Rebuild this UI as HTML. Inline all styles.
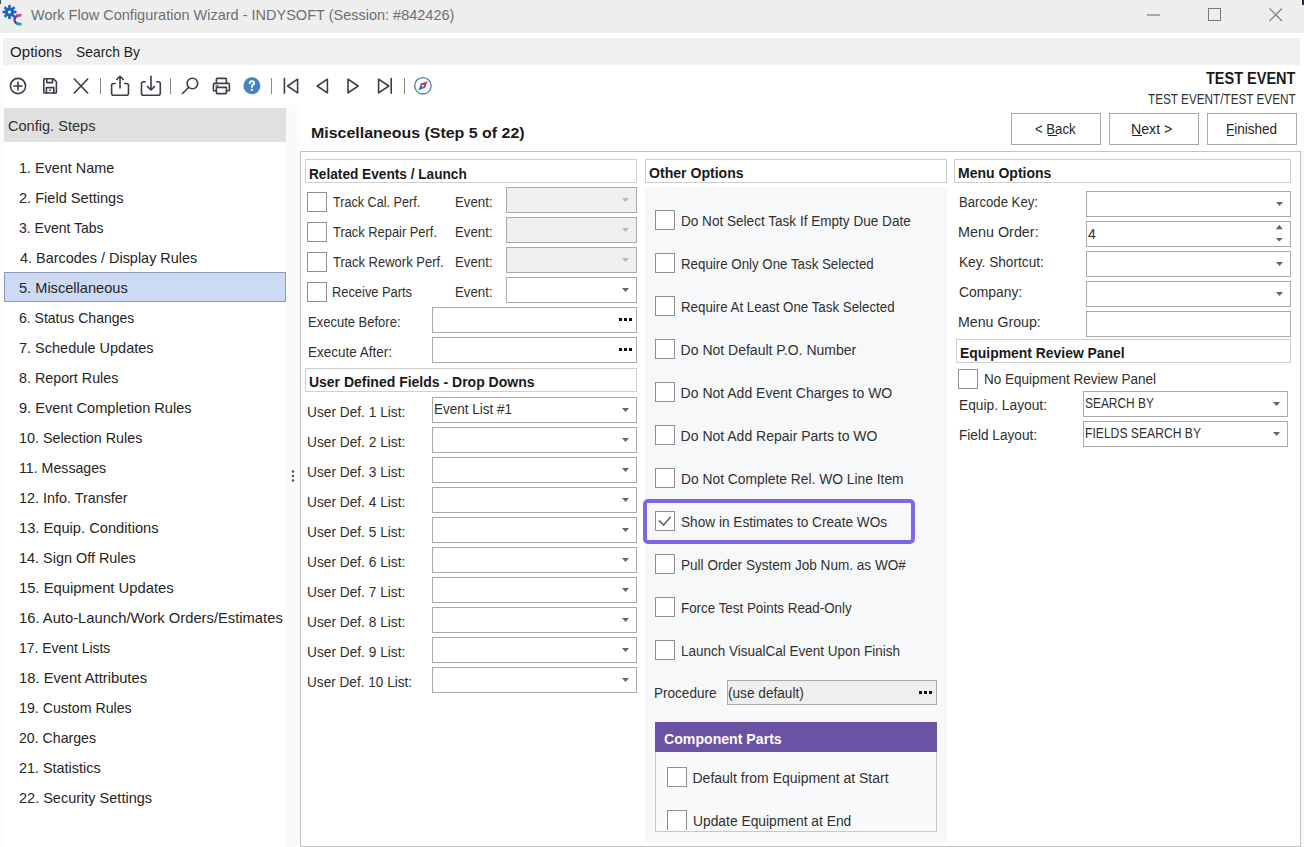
<!DOCTYPE html>
<html><head><meta charset="utf-8"><style>
html,body{margin:0;padding:0;width:1304px;height:847px;overflow:hidden;background:#fff;position:relative}
.t{position:absolute;font-family:"Liberation Sans",sans-serif;line-height:1;white-space:nowrap}
svg{position:absolute;overflow:visible}
</style></head><body>
<div style="position:absolute;left:0px;top:0px;width:1304px;height:33px;background:#eeeeee;"></div>
<svg style="left:0;top:0" width="1304" height="40"><line x1="1147" y1="15" x2="1160" y2="15" stroke="#7a7a7a" stroke-width="1.2"/><rect x="1208.5" y="8.5" width="12" height="12" fill="none" stroke="#7a7a7a" stroke-width="1"/><path d="M1269.5 8.5 L1282 21 M1282 8.5 L1269.5 21" stroke="#7a7a7a" stroke-width="1.2"/></svg>
<svg style="left:0;top:0" width="30" height="30" viewBox="0 0 30 30"><g transform="translate(9.5,12)" fill="#1565c0"><circle r="4.6"/><rect x="-1.3" y="-7" width="2.6" height="3.5" transform="rotate(0)"/><rect x="-1.3" y="-7" width="2.6" height="3.5" transform="rotate(45)"/><rect x="-1.3" y="-7" width="2.6" height="3.5" transform="rotate(90)"/><rect x="-1.3" y="-7" width="2.6" height="3.5" transform="rotate(135)"/><rect x="-1.3" y="-7" width="2.6" height="3.5" transform="rotate(180)"/><rect x="-1.3" y="-7" width="2.6" height="3.5" transform="rotate(225)"/><rect x="-1.3" y="-7" width="2.6" height="3.5" transform="rotate(270)"/><rect x="-1.3" y="-7" width="2.6" height="3.5" transform="rotate(315)"/><circle r="1.6" fill="#fff"/></g><path d="M20.5 15.2 C16.5 15.5 14.5 17.5 14.5 20 C14.5 22.5 16.5 24.2 20.5 24" fill="none" stroke="#6a3fa0" stroke-width="2.4"/><path d="M16.5 15.5 L21.5 15" stroke="#d04a8a" stroke-width="2.4"/><path d="M16.5 23.8 L21.5 24.2" stroke="#1aa3b5" stroke-width="2.4"/></svg>
<div style="position:absolute;left:0px;top:0px;width:1px;height:4px;background:#3a4a50;"></div>
<div style="position:absolute;left:1302px;top:0px;width:2px;height:5px;background:#2a2a48;"></div>
<div style="position:absolute;left:3px;top:38px;width:1297px;height:27px;background:#f0f0f0;"></div>
<svg style="left:0;top:65" width="460" height="40" viewBox="0 65 460 40"><g fill="none" stroke="#3c3c4a" stroke-width="1.6" stroke-linecap="round" stroke-linejoin="round"><circle cx="18" cy="86" r="7.6"/><path d="M18 82 V90 M14 86 H22"/><path d="M43.8 79.5 Q43.8 78.8 44.5 78.8 H53.5 L56.4 81.7 V92.2 Q56.4 93 55.6 93 H44.6 Q43.8 93 43.8 92.2 Z"/><path d="M46.8 79 V82.6 H52.6 V79"/><path d="M46.4 93 V87.6 H53.8 V93"/><rect x="49.2" y="89.4" width="1.8" height="1.4" fill="#3c3c4a" stroke="none"/><path d="M74.3 79 L87.7 93 M87.7 79 L74.3 93"/><path d="M100.5 78.5 V93.8" stroke="#8a8a8a" stroke-width="1"/><path d="M170.5 78.5 V93.8" stroke="#8a8a8a" stroke-width="1"/><path d="M271.5 78.5 V93.8" stroke="#8a8a8a" stroke-width="1"/><path d="M404.5 78.5 V93.8" stroke="#8a8a8a" stroke-width="1"/><path d="M115.2 83.5 H113.6 Q111.6 83.5 111.6 85.5 V93.3 Q111.6 95.3 113.6 95.3 H126.5 Q128.5 95.3 128.5 93.3 V85.5 Q128.5 83.5 126.5 83.5 H124.8"/><path d="M120 88 V76.5 M116.8 79.5 L120 76.3 L123.2 79.5"/><path d="M145.2 81.8 H143.5 Q141.5 81.8 141.5 83.8 V93.3 Q141.5 95.3 143.5 95.3 H158.3 Q160.3 95.3 160.3 93.3 V83.8 Q160.3 81.8 158.3 81.8 H156.8"/><path d="M151 76.3 V89.8 M147.6 86.6 L151 90 L154.4 86.6"/><circle cx="192.4" cy="83.5" r="5.3"/><path d="M188.6 87.5 L182.5 93.5"/><path d="M216.4 82.6 V79.2 Q216.4 78.4 217.2 78.4 H225.6 Q226.4 78.4 226.4 79.2 V82.6"/><path d="M216.2 90.8 H214.2 Q213.4 90.8 213.4 90 V84.4 Q213.4 83.4 214.4 83.4 H228.4 Q229.4 83.4 229.4 84.4 V90 Q229.4 90.8 228.6 90.8 H226.6"/><path d="M216.4 87.4 H226.4 V92.8 Q226.4 93.6 225.6 93.6 H217.2 Q216.4 93.6 216.4 92.8 Z"/><path d="M215.8 85.8 H218" stroke-width="1.2"/><path d="M284.4 78.6 V93.3"/><path d="M297.6 79.2 L287.6 86 L297.6 92.8 Z"/><path d="M327.4 79.2 L317.2 86 L327.4 92.8 Z"/><path d="M348 79.2 L358.2 86 L348 92.8 Z"/><path d="M378.6 79.2 L388.8 86 L378.6 92.8 Z"/><path d="M391.2 78.6 V93.3"/></g><circle cx="251.9" cy="85.8" r="8.5" fill="#4682c2"/><path d="M249.8 83.3 Q249.8 81.1 251.9 81.1 Q254.1 81.1 254.1 83 Q254.1 84.2 252.9 84.9 Q251.9 85.6 251.9 87" fill="none" stroke="#fff" stroke-width="1.9" stroke-linecap="round"/><circle cx="251.9" cy="89.8" r="1.15" fill="#fff"/><circle cx="422.9" cy="85.8" r="8.2" fill="none" stroke="#4b7bac" stroke-width="1.3"/><path d="M427.8 81 L420.1 84.1 L424.6 88.6 Z" fill="#d2334a"/><path d="M418.2 90.6 L421.2 83 L425.7 87.5 Z" fill="#3673b5"/><circle cx="422.9" cy="85.8" r="1" fill="#fff"/></svg>
<div style="position:absolute;left:0px;top:65px;width:4px;height:782px;background:#fbfbfb;"></div>
<div style="position:absolute;left:4px;top:108px;width:282px;height:34px;background:#e0e0e0;"></div>
<div style="position:absolute;left:286px;top:105px;width:14px;height:742px;background:#f9fafb;"></div>
<svg style="left:290;top:468" width="8" height="16"><circle cx="3" cy="3.5" r="1.2" fill="#555"/><circle cx="3" cy="8" r="1.2" fill="#555"/><circle cx="3" cy="12.5" r="1.2" fill="#555"/></svg>
<div style="position:absolute;left:4px;top:272px;width:282px;height:30px;background:#cddaf4;border:1px solid #8e9ab4;box-sizing:border-box;"></div>
<div style="position:absolute;left:1011px;top:113px;width:90px;height:32px;background:#ffffff;border:1px solid #a8a8a8;box-sizing:border-box;"></div>
<div style="position:absolute;left:1109px;top:113px;width:90px;height:32px;background:#ffffff;border:1px solid #a8a8a8;box-sizing:border-box;"></div>
<div style="position:absolute;left:1207px;top:113px;width:90px;height:32px;background:#ffffff;border:1px solid #a8a8a8;box-sizing:border-box;"></div>
<div style="position:absolute;left:1048px;top:135px;width:9px;height:1px;background:#262626;"></div>
<div style="position:absolute;left:1132px;top:135px;width:10px;height:1px;background:#262626;"></div>
<div style="position:absolute;left:1227px;top:135px;width:7px;height:1px;background:#262626;"></div>
<div style="position:absolute;left:1301px;top:151px;width:3px;height:696px;background:#f6f7f9;"></div>
<div style="position:absolute;left:300px;top:151px;width:1001px;height:696px;background:transparent;border:1px solid #c2c2c2;box-sizing:border-box;"></div>
<div style="position:absolute;left:305px;top:159px;width:332px;height:24px;background:#fff;border:1px solid #cfcfcf;box-sizing:border-box;"></div>
<div style="position:absolute;left:307px;top:192px;width:20px;height:20px;background:#fff;border:1px solid #8f8f8f;box-sizing:border-box;"></div>
<div style="position:absolute;left:506px;top:187px;width:131px;height:26px;background:#efefef;border:1px solid #aaaaaa;box-sizing:border-box;"></div>
<svg style="left:0;top:0" width="1" height="1"><path d="M622 198.0 h7 l-3.5 4 z" fill="#b8b8b8"/></svg>
<div style="position:absolute;left:307px;top:222px;width:20px;height:20px;background:#fff;border:1px solid #8f8f8f;box-sizing:border-box;"></div>
<div style="position:absolute;left:506px;top:217px;width:131px;height:26px;background:#efefef;border:1px solid #aaaaaa;box-sizing:border-box;"></div>
<svg style="left:0;top:0" width="1" height="1"><path d="M622 228.0 h7 l-3.5 4 z" fill="#b8b8b8"/></svg>
<div style="position:absolute;left:307px;top:252px;width:20px;height:20px;background:#fff;border:1px solid #8f8f8f;box-sizing:border-box;"></div>
<div style="position:absolute;left:506px;top:247px;width:131px;height:26px;background:#efefef;border:1px solid #aaaaaa;box-sizing:border-box;"></div>
<svg style="left:0;top:0" width="1" height="1"><path d="M622 258.0 h7 l-3.5 4 z" fill="#b8b8b8"/></svg>
<div style="position:absolute;left:307px;top:282px;width:20px;height:20px;background:#fff;border:1px solid #8f8f8f;box-sizing:border-box;"></div>
<div style="position:absolute;left:506px;top:277px;width:131px;height:26px;background:#fff;border:1px solid #aaaaaa;box-sizing:border-box;"></div>
<svg style="left:0;top:0" width="1" height="1"><path d="M622 288.0 h7 l-3.5 4 z" fill="#666"/></svg>
<div style="position:absolute;left:432px;top:307px;width:205px;height:26px;background:#fff;border:1px solid #aaaaaa;box-sizing:border-box;"></div>
<div style="position:absolute;left:619px;top:318.0px;width:3px;height:3px;background:#111;"></div>
<div style="position:absolute;left:624px;top:318.0px;width:3px;height:3px;background:#111;"></div>
<div style="position:absolute;left:629px;top:318.0px;width:3px;height:3px;background:#111;"></div>
<div style="position:absolute;left:432px;top:337px;width:205px;height:26px;background:#fff;border:1px solid #aaaaaa;box-sizing:border-box;"></div>
<div style="position:absolute;left:619px;top:348.0px;width:3px;height:3px;background:#111;"></div>
<div style="position:absolute;left:624px;top:348.0px;width:3px;height:3px;background:#111;"></div>
<div style="position:absolute;left:629px;top:348.0px;width:3px;height:3px;background:#111;"></div>
<div style="position:absolute;left:305px;top:368px;width:332px;height:24px;background:#fff;border:1px solid #cfcfcf;box-sizing:border-box;"></div>
<div style="position:absolute;left:432px;top:397px;width:205px;height:26px;background:#fff;border:1px solid #aaaaaa;box-sizing:border-box;"></div>
<svg style="left:0;top:0" width="1" height="1"><path d="M622 408.0 h7 l-3.5 4 z" fill="#666"/></svg>
<div style="position:absolute;left:432px;top:427px;width:205px;height:26px;background:#fff;border:1px solid #aaaaaa;box-sizing:border-box;"></div>
<svg style="left:0;top:0" width="1" height="1"><path d="M622 438.0 h7 l-3.5 4 z" fill="#666"/></svg>
<div style="position:absolute;left:432px;top:457px;width:205px;height:26px;background:#fff;border:1px solid #aaaaaa;box-sizing:border-box;"></div>
<svg style="left:0;top:0" width="1" height="1"><path d="M622 468.0 h7 l-3.5 4 z" fill="#666"/></svg>
<div style="position:absolute;left:432px;top:487px;width:205px;height:26px;background:#fff;border:1px solid #aaaaaa;box-sizing:border-box;"></div>
<svg style="left:0;top:0" width="1" height="1"><path d="M622 498.0 h7 l-3.5 4 z" fill="#666"/></svg>
<div style="position:absolute;left:432px;top:517px;width:205px;height:26px;background:#fff;border:1px solid #aaaaaa;box-sizing:border-box;"></div>
<svg style="left:0;top:0" width="1" height="1"><path d="M622 528.0 h7 l-3.5 4 z" fill="#666"/></svg>
<div style="position:absolute;left:432px;top:547px;width:205px;height:26px;background:#fff;border:1px solid #aaaaaa;box-sizing:border-box;"></div>
<svg style="left:0;top:0" width="1" height="1"><path d="M622 558.0 h7 l-3.5 4 z" fill="#666"/></svg>
<div style="position:absolute;left:432px;top:577px;width:205px;height:26px;background:#fff;border:1px solid #aaaaaa;box-sizing:border-box;"></div>
<svg style="left:0;top:0" width="1" height="1"><path d="M622 588.0 h7 l-3.5 4 z" fill="#666"/></svg>
<div style="position:absolute;left:432px;top:607px;width:205px;height:26px;background:#fff;border:1px solid #aaaaaa;box-sizing:border-box;"></div>
<svg style="left:0;top:0" width="1" height="1"><path d="M622 618.0 h7 l-3.5 4 z" fill="#666"/></svg>
<div style="position:absolute;left:432px;top:637px;width:205px;height:26px;background:#fff;border:1px solid #aaaaaa;box-sizing:border-box;"></div>
<svg style="left:0;top:0" width="1" height="1"><path d="M622 648.0 h7 l-3.5 4 z" fill="#666"/></svg>
<div style="position:absolute;left:432px;top:667px;width:205px;height:26px;background:#fff;border:1px solid #aaaaaa;box-sizing:border-box;"></div>
<svg style="left:0;top:0" width="1" height="1"><path d="M622 678.0 h7 l-3.5 4 z" fill="#666"/></svg>
<div style="position:absolute;left:645px;top:159px;width:302px;height:24px;background:#fff;border:1px solid #cfcfcf;box-sizing:border-box;"></div>
<div style="position:absolute;left:645px;top:187px;width:302px;height:655px;background:#f7f8fa;"></div>
<div style="position:absolute;left:655px;top:210px;width:20px;height:20px;background:#fff;border:1px solid #8f8f8f;box-sizing:border-box;"></div>
<div style="position:absolute;left:655px;top:253px;width:20px;height:20px;background:#fff;border:1px solid #8f8f8f;box-sizing:border-box;"></div>
<div style="position:absolute;left:655px;top:296px;width:20px;height:20px;background:#fff;border:1px solid #8f8f8f;box-sizing:border-box;"></div>
<div style="position:absolute;left:655px;top:339px;width:20px;height:20px;background:#fff;border:1px solid #8f8f8f;box-sizing:border-box;"></div>
<div style="position:absolute;left:655px;top:382px;width:20px;height:20px;background:#fff;border:1px solid #8f8f8f;box-sizing:border-box;"></div>
<div style="position:absolute;left:655px;top:425px;width:20px;height:20px;background:#fff;border:1px solid #8f8f8f;box-sizing:border-box;"></div>
<div style="position:absolute;left:655px;top:468px;width:20px;height:20px;background:#fff;border:1px solid #8f8f8f;box-sizing:border-box;"></div>
<div style="position:absolute;left:655px;top:511px;width:20px;height:20px;background:#fff;border:1px solid #8f8f8f;box-sizing:border-box;"></div>
<svg style="left:655px;top:511px" width="20" height="20"><path d="M4 9.4 L8.6 14 L15.7 5.7" fill="none" stroke="#666" stroke-width="1.6"/></svg>
<div style="position:absolute;left:655px;top:554px;width:20px;height:20px;background:#fff;border:1px solid #8f8f8f;box-sizing:border-box;"></div>
<div style="position:absolute;left:655px;top:597px;width:20px;height:20px;background:#fff;border:1px solid #8f8f8f;box-sizing:border-box;"></div>
<div style="position:absolute;left:655px;top:640px;width:20px;height:20px;background:#fff;border:1px solid #8f8f8f;box-sizing:border-box;"></div>
<div style="position:absolute;left:643px;top:499px;width:272px;height:45px;background:transparent;border:4px solid #7b68e8;border-radius:5px;box-sizing:border-box;"></div>
<div style="position:absolute;left:727px;top:680px;width:210px;height:25px;background:#efefef;border:1px solid #aaaaaa;box-sizing:border-box;"></div>
<div style="position:absolute;left:919px;top:690.5px;width:3px;height:3px;background:#111;"></div>
<div style="position:absolute;left:924px;top:690.5px;width:3px;height:3px;background:#111;"></div>
<div style="position:absolute;left:929px;top:690.5px;width:3px;height:3px;background:#111;"></div>
<div style="position:absolute;left:655px;top:722px;width:282px;height:110px;background:#f9fafb;border:1px solid #c8c8c8;box-sizing:border-box;"></div>
<div style="position:absolute;left:655px;top:722px;width:282px;height:30px;background:#6b52a5;"></div>
<div style="position:absolute;left:667px;top:767px;width:20px;height:20px;background:#fff;border:1px solid #8f8f8f;box-sizing:border-box;"></div>
<div style="position:absolute;left:667px;top:810px;width:20px;height:20px;background:#fff;border:1px solid #8f8f8f;border-bottom:none;box-sizing:border-box;"></div>
<div style="position:absolute;left:954px;top:159px;width:337px;height:24px;background:#fff;border:1px solid #cfcfcf;box-sizing:border-box;"></div>
<div style="position:absolute;left:1086px;top:191px;width:205px;height:26px;background:#fff;border:1px solid #aaaaaa;box-sizing:border-box;"></div>
<svg style="left:0;top:0" width="1" height="1"><path d="M1276 202.0 h7 l-3.5 4 z" fill="#666"/></svg>
<div style="position:absolute;left:1086px;top:221px;width:205px;height:26px;background:#fff;border:1px solid #aaaaaa;box-sizing:border-box;"></div>
<svg style="left:0;top:0" width="1" height="1"><path d="M1275.8 229.2 h7 l-3.5 -4.4 z M1275.8 238 h7 l-3.5 3.4 z" fill="#666"/></svg>
<div style="position:absolute;left:1086px;top:251px;width:205px;height:26px;background:#fff;border:1px solid #aaaaaa;box-sizing:border-box;"></div>
<svg style="left:0;top:0" width="1" height="1"><path d="M1276 262.0 h7 l-3.5 4 z" fill="#666"/></svg>
<div style="position:absolute;left:1086px;top:281px;width:205px;height:26px;background:#fff;border:1px solid #aaaaaa;box-sizing:border-box;"></div>
<svg style="left:0;top:0" width="1" height="1"><path d="M1276 292.0 h7 l-3.5 4 z" fill="#666"/></svg>
<div style="position:absolute;left:1086px;top:311px;width:205px;height:26px;background:#fff;border:1px solid #aaaaaa;box-sizing:border-box;"></div>
<div style="position:absolute;left:956px;top:339px;width:335px;height:24px;background:#fff;border:1px solid #cfcfcf;box-sizing:border-box;"></div>
<div style="position:absolute;left:958px;top:369px;width:20px;height:20px;background:#fff;border:1px solid #8f8f8f;box-sizing:border-box;"></div>
<div style="position:absolute;left:1083px;top:391px;width:205px;height:26px;background:#fff;border:1px solid #aaaaaa;box-sizing:border-box;"></div>
<svg style="left:0;top:0" width="1" height="1"><path d="M1273 402.0 h7 l-3.5 4 z" fill="#666"/></svg>
<div style="position:absolute;left:1083px;top:421px;width:205px;height:26px;background:#fff;border:1px solid #aaaaaa;box-sizing:border-box;"></div>
<svg style="left:0;top:0" width="1" height="1"><path d="M1273 432.0 h7 l-3.5 4 z" fill="#666"/></svg>
<div class="t " style="left:31.00px;transform-origin:0 0;top:7.20px;font-size:15px;font-weight:400;color:#6e6e6e;transform:scaleX(0.9668);">Work Flow Configuration Wizard - INDYSOFT (Session: #842426)</div>
<div class="t " style="left:9.56px;transform-origin:0 0;top:45.02px;font-size:14.5px;font-weight:400;color:#1e1e1e;transform:scaleX(1.0408);">Options</div>
<div class="t " style="left:75.75px;transform-origin:0 0;top:45.02px;font-size:14.5px;font-weight:400;color:#1e1e1e;transform:scaleX(0.9545);">Search By</div>
<div class="t " style="left:1205.90px;transform-origin:0 0;top:70.95px;font-size:16px;font-weight:700;color:#1a1a1a;transform:scaleX(0.9061);">TEST EVENT</div>
<div class="t " style="left:1148.00px;transform-origin:0 0;top:91.95px;font-size:14px;font-weight:400;color:#303030;transform:scaleX(0.8386);">TEST EVENT/TEST EVENT</div>
<div class="t " style="left:8.43px;transform-origin:0 0;top:118.00px;font-size:15px;font-weight:400;color:#303030;transform:scaleX(0.9708);">Config. Steps</div>
<div class="t " style="left:19.24px;transform-origin:0 0;top:160.30px;font-size:15px;font-weight:400;color:#262626;transform:scaleX(0.9592);">1. Event Name</div>
<div class="t " style="left:19.23px;transform-origin:0 0;top:190.30px;font-size:15px;font-weight:400;color:#262626;transform:scaleX(0.9717);">2. Field Settings</div>
<div class="t " style="left:19.27px;transform-origin:0 0;top:220.30px;font-size:15px;font-weight:400;color:#262626;transform:scaleX(0.9326);">3. Event Tabs</div>
<div class="t " style="left:20.20px;transform-origin:0 0;top:250.30px;font-size:15px;font-weight:400;color:#262626;transform:scaleX(0.9620);">4. Barcodes / Display Rules</div>
<div class="t " style="left:19.23px;transform-origin:0 0;top:280.30px;font-size:15px;font-weight:400;color:#262626;transform:scaleX(0.9727);">5. Miscellaneous</div>
<div class="t " style="left:19.27px;transform-origin:0 0;top:310.30px;font-size:15px;font-weight:400;color:#262626;transform:scaleX(0.9344);">6. Status Changes</div>
<div class="t " style="left:19.23px;transform-origin:0 0;top:340.30px;font-size:15px;font-weight:400;color:#262626;transform:scaleX(0.9659);">7. Schedule Updates</div>
<div class="t " style="left:19.25px;transform-origin:0 0;top:370.30px;font-size:15px;font-weight:400;color:#262626;transform:scaleX(0.9534);">8. Report Rules</div>
<div class="t " style="left:19.23px;transform-origin:0 0;top:400.30px;font-size:15px;font-weight:400;color:#262626;transform:scaleX(0.9716);">9. Event Completion Rules</div>
<div class="t " style="left:19.25px;transform-origin:0 0;top:430.30px;font-size:15px;font-weight:400;color:#262626;transform:scaleX(0.9547);">10. Selection Rules</div>
<div class="t " style="left:19.25px;transform-origin:0 0;top:460.30px;font-size:15px;font-weight:400;color:#262626;transform:scaleX(0.9451);">11. Messages</div>
<div class="t " style="left:19.24px;transform-origin:0 0;top:490.30px;font-size:15px;font-weight:400;color:#262626;transform:scaleX(0.9580);">12. Info. Transfer</div>
<div class="t " style="left:19.22px;transform-origin:0 0;top:520.30px;font-size:15px;font-weight:400;color:#262626;transform:scaleX(0.9787);">13. Equip. Conditions</div>
<div class="t " style="left:19.24px;transform-origin:0 0;top:550.30px;font-size:15px;font-weight:400;color:#262626;transform:scaleX(0.9617);">14. Sign Off Rules</div>
<div class="t " style="left:19.21px;transform-origin:0 0;top:580.30px;font-size:15px;font-weight:400;color:#262626;transform:scaleX(0.9871);">15. Equipment Updates</div>
<div class="t " style="left:19.22px;transform-origin:0 0;top:610.30px;font-size:15px;font-weight:400;color:#262626;transform:scaleX(0.9835);">16. Auto-Launch/Work Orders/Estimates</div>
<div class="t " style="left:19.27px;transform-origin:0 0;top:640.30px;font-size:15px;font-weight:400;color:#262626;transform:scaleX(0.9278);">17. Event Lists</div>
<div class="t " style="left:19.22px;transform-origin:0 0;top:670.30px;font-size:15px;font-weight:400;color:#262626;transform:scaleX(0.9845);">18. Event Attributes</div>
<div class="t " style="left:19.26px;transform-origin:0 0;top:700.30px;font-size:15px;font-weight:400;color:#262626;transform:scaleX(0.9449);">19. Custom Rules</div>
<div class="t " style="left:19.26px;transform-origin:0 0;top:730.30px;font-size:15px;font-weight:400;color:#262626;transform:scaleX(0.9425);">20. Charges</div>
<div class="t " style="left:19.24px;transform-origin:0 0;top:760.30px;font-size:15px;font-weight:400;color:#262626;transform:scaleX(0.9595);">21. Statistics</div>
<div class="t " style="left:19.23px;transform-origin:0 0;top:790.30px;font-size:15px;font-weight:400;color:#262626;transform:scaleX(0.9669);">22. Security Settings</div>
<div class="t " style="left:310.97px;transform-origin:0 0;top:124.88px;font-size:15.5px;font-weight:700;color:#1a1a1a;transform:scaleX(1.0291);">Miscellaneous (Step 5 of 22)</div>
<div class="t " style="left:1034.75px;transform-origin:0 0;top:122.92px;font-size:13.8px;font-weight:400;color:#262626;transform:scaleX(0.9524);">&lt; Back</div>
<div class="t " style="left:1131.37px;transform-origin:0 0;top:122.92px;font-size:13.8px;font-weight:400;color:#262626;transform:scaleX(1.0256);">Next &gt;</div>
<div class="t " style="left:1225.62px;transform-origin:0 0;top:122.92px;font-size:13.8px;font-weight:400;color:#262626;transform:scaleX(0.9800);">Finished</div>
<div class="t " style="left:308.72px;transform-origin:0 0;top:166.55px;font-size:14px;font-weight:700;color:#1a1a1a;transform:scaleX(0.9750);">Related Events / Launch</div>
<div class="t " style="left:333.40px;transform-origin:0 0;top:195.35px;font-size:14px;font-weight:400;color:#303030;transform:scaleX(0.9021);">Track Cal. Perf.</div>
<div class="t " style="left:454.75px;transform-origin:0 0;top:194.65px;font-size:14px;font-weight:400;color:#303030;transform:scaleX(0.9474);">Event:</div>
<div class="t " style="left:333.40px;transform-origin:0 0;top:225.35px;font-size:14px;font-weight:400;color:#303030;transform:scaleX(0.9196);">Track Repair Perf.</div>
<div class="t " style="left:454.75px;transform-origin:0 0;top:224.65px;font-size:14px;font-weight:400;color:#303030;transform:scaleX(0.9474);">Event:</div>
<div class="t " style="left:333.40px;transform-origin:0 0;top:255.35px;font-size:14px;font-weight:400;color:#303030;transform:scaleX(0.9280);">Track Rework Perf.</div>
<div class="t " style="left:454.75px;transform-origin:0 0;top:254.65px;font-size:14px;font-weight:400;color:#303030;transform:scaleX(0.9474);">Event:</div>
<div class="t " style="left:332.48px;transform-origin:0 0;top:285.35px;font-size:14px;font-weight:400;color:#303030;transform:scaleX(0.9186);">Receive Parts</div>
<div class="t " style="left:454.75px;transform-origin:0 0;top:284.65px;font-size:14px;font-weight:400;color:#303030;transform:scaleX(0.9474);">Event:</div>
<div class="t " style="left:307.67px;transform-origin:0 0;top:315.15px;font-size:14px;font-weight:400;color:#303030;transform:scaleX(0.9286);">Execute Before:</div>
<div class="t " style="left:307.64px;transform-origin:0 0;top:345.15px;font-size:14px;font-weight:400;color:#303030;transform:scaleX(0.9647);">Execute After:</div>
<div class="t " style="left:308.90px;transform-origin:0 0;top:375.45px;font-size:14px;font-weight:700;color:#1a1a1a;">User Defined Fields - Drop Downs</div>
<div class="t " style="left:307.42px;transform-origin:0 0;top:405.15px;font-size:14px;font-weight:400;color:#303030;transform:scaleX(0.9796);">User Def. 1 List:</div>
<div class="t " style="left:307.42px;transform-origin:0 0;top:435.15px;font-size:14px;font-weight:400;color:#303030;transform:scaleX(0.9796);">User Def. 2 List:</div>
<div class="t " style="left:307.42px;transform-origin:0 0;top:465.15px;font-size:14px;font-weight:400;color:#303030;transform:scaleX(0.9796);">User Def. 3 List:</div>
<div class="t " style="left:307.42px;transform-origin:0 0;top:495.15px;font-size:14px;font-weight:400;color:#303030;transform:scaleX(0.9796);">User Def. 4 List:</div>
<div class="t " style="left:307.42px;transform-origin:0 0;top:525.15px;font-size:14px;font-weight:400;color:#303030;transform:scaleX(0.9796);">User Def. 5 List:</div>
<div class="t " style="left:307.42px;transform-origin:0 0;top:555.15px;font-size:14px;font-weight:400;color:#303030;transform:scaleX(0.9796);">User Def. 6 List:</div>
<div class="t " style="left:307.42px;transform-origin:0 0;top:585.15px;font-size:14px;font-weight:400;color:#303030;transform:scaleX(0.9796);">User Def. 7 List:</div>
<div class="t " style="left:307.42px;transform-origin:0 0;top:615.15px;font-size:14px;font-weight:400;color:#303030;transform:scaleX(0.9796);">User Def. 8 List:</div>
<div class="t " style="left:307.42px;transform-origin:0 0;top:645.15px;font-size:14px;font-weight:400;color:#303030;transform:scaleX(0.9796);">User Def. 9 List:</div>
<div class="t " style="left:307.43px;transform-origin:0 0;top:675.15px;font-size:14px;font-weight:400;color:#303030;transform:scaleX(0.9717);">User Def. 10 List:</div>
<div class="t " style="left:433.74px;transform-origin:0 0;top:402.45px;font-size:14px;font-weight:400;color:#303030;transform:scaleX(0.9625);">Event List #1</div>
<div class="t " style="left:648.59px;transform-origin:0 0;top:166.35px;font-size:14px;font-weight:700;color:#1a1a1a;transform:scaleX(1.0054);">Other Options</div>
<div class="t " style="left:680.63px;transform-origin:0 0;top:213.95px;font-size:14px;font-weight:400;color:#303030;transform:scaleX(0.9691);">Do Not Select Task If Empty Due Date</div>
<div class="t " style="left:680.65px;transform-origin:0 0;top:256.95px;font-size:14px;font-weight:400;color:#303030;transform:scaleX(0.9502);">Require Only One Task Selected</div>
<div class="t " style="left:680.65px;transform-origin:0 0;top:299.95px;font-size:14px;font-weight:400;color:#303030;transform:scaleX(0.9507);">Require At Least One Task Selected</div>
<div class="t " style="left:680.60px;transform-origin:0 0;top:342.95px;font-size:14px;font-weight:400;color:#303030;">Do Not Default P.O. Number</div>
<div class="t " style="left:680.60px;transform-origin:0 0;top:385.95px;font-size:14px;font-weight:400;color:#303030;">Do Not Add Event Charges to WO</div>
<div class="t " style="left:680.60px;transform-origin:0 0;top:428.95px;font-size:14px;font-weight:400;color:#303030;">Do Not Add Repair Parts to WO</div>
<div class="t " style="left:680.61px;transform-origin:0 0;top:471.95px;font-size:14px;font-weight:400;color:#303030;transform:scaleX(0.9866);">Do Not Complete Rel. WO Line Item</div>
<div class="t " style="left:680.63px;transform-origin:0 0;top:514.95px;font-size:14px;font-weight:400;color:#303030;transform:scaleX(0.9738);">Show in Estimates to Create WOs</div>
<div class="t " style="left:680.63px;transform-origin:0 0;top:557.95px;font-size:14px;font-weight:400;color:#303030;transform:scaleX(0.9697);">Pull Order System Job Num. as WO#</div>
<div class="t " style="left:680.64px;transform-origin:0 0;top:600.95px;font-size:14px;font-weight:400;color:#303030;transform:scaleX(0.9551);">Force Test Points Read-Only</div>
<div class="t " style="left:680.64px;transform-origin:0 0;top:643.95px;font-size:14px;font-weight:400;color:#303030;transform:scaleX(0.9644);">Launch VisualCal Event Upon Finish</div>
<div class="t " style="left:654.43px;transform-origin:0 0;top:686.15px;font-size:14px;font-weight:400;color:#303030;transform:scaleX(0.9683);">Procedure</div>
<div class="t " style="left:728.03px;transform-origin:0 0;top:686.15px;font-size:14px;font-weight:400;color:#303030;transform:scaleX(0.9737);">(use default)</div>
<div class="t " style="left:664.29px;transform-origin:0 0;top:732.05px;font-size:14px;font-weight:700;color:#ffffff;transform:scaleX(1.0087);">Component Parts</div>
<div class="t " style="left:692.50px;transform-origin:0 0;top:771.15px;font-size:14px;font-weight:400;color:#303030;">Default from Equipment at Start</div>
<div class="t " style="left:692.51px;transform-origin:0 0;top:814.15px;font-size:14px;font-weight:400;color:#303030;transform:scaleX(0.9874);">Update Equipment at End</div>
<div class="t " style="left:958.00px;transform-origin:0 0;top:166.35px;font-size:14px;font-weight:700;color:#1a1a1a;">Menu Options</div>
<div class="t " style="left:958.56px;transform-origin:0 0;top:195.25px;font-size:14px;font-weight:400;color:#303030;transform:scaleX(0.9390);">Barcode Key:</div>
<div class="t " style="left:958.47px;transform-origin:0 0;top:225.25px;font-size:14px;font-weight:400;color:#303030;transform:scaleX(1.0260);">Menu Order:</div>
<div class="t " style="left:958.52px;transform-origin:0 0;top:255.25px;font-size:14px;font-weight:400;color:#303030;transform:scaleX(0.9765);">Key. Shortcut:</div>
<div class="t " style="left:958.51px;transform-origin:0 0;top:285.25px;font-size:14px;font-weight:400;color:#303030;transform:scaleX(0.9919);">Company:</div>
<div class="t " style="left:958.49px;transform-origin:0 0;top:315.25px;font-size:14px;font-weight:400;color:#303030;transform:scaleX(1.0125);">Menu Group:</div>
<div class="t " style="left:1088.00px;transform-origin:0 0;top:227.15px;font-size:14px;font-weight:400;color:#303030;">4</div>
<div class="t " style="left:959.91px;transform-origin:0 0;top:346.35px;font-size:14px;font-weight:700;color:#1a1a1a;transform:scaleX(0.9939);">Equipment Review Panel</div>
<div class="t " style="left:983.73px;transform-origin:0 0;top:372.15px;font-size:14px;font-weight:400;color:#303030;transform:scaleX(0.9659);">No Equipment Review Panel</div>
<div class="t " style="left:958.52px;transform-origin:0 0;top:397.75px;font-size:14px;font-weight:400;color:#303030;transform:scaleX(0.9828);">Equip. Layout:</div>
<div class="t " style="left:1084.86px;transform-origin:0 0;top:396.28px;font-size:14.2px;font-weight:400;color:#303030;transform:scaleX(0.8395);">SEARCH BY</div>
<div class="t " style="left:958.53px;transform-origin:0 0;top:427.75px;font-size:14px;font-weight:400;color:#303030;transform:scaleX(0.9744);">Field Layout:</div>
<div class="t " style="left:1084.84px;transform-origin:0 0;top:426.28px;font-size:14.2px;font-weight:400;color:#303030;transform:scaleX(0.8552);">FIELDS SEARCH BY</div>
</body></html>
